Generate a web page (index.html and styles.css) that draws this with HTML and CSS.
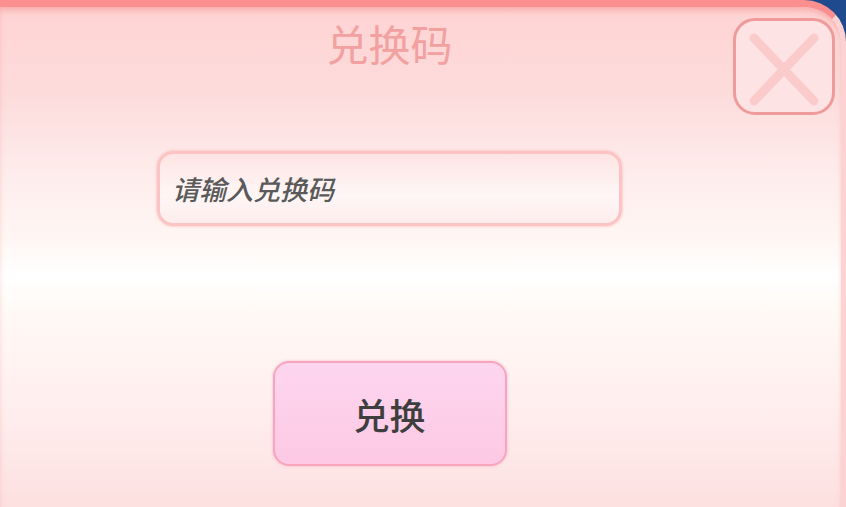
FILE: index.html
```html
<!DOCTYPE html>
<html lang="zh">
<head>
  <meta charset="UTF-8">
  <meta name="viewport" content="width=device-width, initial-scale=1.0">
  <title>兑换码</title>
  <link rel="stylesheet" href="styles.css">
</head>
<body>
  <div class="panel">
    <!-- Judul -->
    <h2 class="title">兑换码</h2>

    <button type="button" class="close-btn" aria-label="关闭">
      <svg viewBox="0 0 96 91" width="96" height="91">
        <path d="M18 17 L78 80 M78 17 L18 80" stroke="#fbcaca" stroke-width="9" stroke-linecap="round" fill="none"/>
      </svg>
    </button>

    <input type="text" class="code-input" placeholder="请输入兑换码">

    <button type="button" class="redeem-btn">兑换</button>
  </div>
</body>
</html>
```

FILE: styles.css
```css
html, body {
  margin: 0;
  padding: 0;
  height: 100%;
}

body {
  background: #1f4b8e;
  font-family: 'Noto Sans CJK SC', 'Noto Sans', sans-serif;
  overflow: hidden;
}

.panel {
  position: relative;
  box-sizing: border-box;
  height: 100vh;
  border-top: 7px solid #fb8f8f;
  border-right: 5px solid #fcd2d2;
  border-top-right-radius: 42px;
  padding: 8px 62px 0 0;
  display: flex;
  flex-direction: column;
  align-items: center;
  background: linear-gradient(to bottom,
    #ffd3d3 0%,
    #fddcdc 18%,
    #fdeceb 33%,
    #fff6f3 46%,
    #ffffff 54%,
    #fffaf6 60%,
    #ffeeee 80%,
    #fde0e0 100%);
  box-shadow: inset 0 5px 6px -2px rgba(240, 130, 130, 0.5);
}

.title {
  margin: 0;
  font-size: 42px;
  line-height: 56px;
  font-weight: normal;
  color: #f2a0a0;
}

.close-btn {
  position: absolute;
  top: 11px;
  right: 6px;
  width: 102px;
  height: 97px;
  padding: 0;
  box-sizing: border-box;
  border: 3px solid #f09b9b;
  border-radius: 22px;
  background: #fde3e3;
  display: flex;
  align-items: center;
  justify-content: center;
  cursor: pointer;
}

.code-input {
  margin-top: 80px;
  width: 465px;
  height: 75px;
  box-sizing: border-box;
  padding: 0 12px;
  border: 3px solid #fbc3c3;
  border-radius: 16px;
  box-shadow: 0 0 3px #f6b3b3;
  background: linear-gradient(to bottom, #fde4e4, #fff6f6 60%, #fdecec);
  font-family: 'Noto Sans CJK SC', sans-serif;
  font-size: 27px;
  font-weight: 500;
  font-style: italic;
  color: #555;
  outline: none;
}

.code-input::placeholder {
  color: #5a5a5a;
  font-style: italic;
}

.redeem-btn {
  margin-top: 135px;
  width: 234px;
  height: 105px;
  border: 2px solid #f6a5bd;
  border-radius: 16px;
  background: linear-gradient(to bottom, #fdd5ef, #fdc9e4);
  box-shadow: 0 0 3px rgba(240, 150, 180, 0.6);
  font-family: 'Noto Sans CJK SC', sans-serif;
  font-size: 36px;
  font-weight: 500;
  color: #3e3e3e;
  cursor: pointer;
}
```
